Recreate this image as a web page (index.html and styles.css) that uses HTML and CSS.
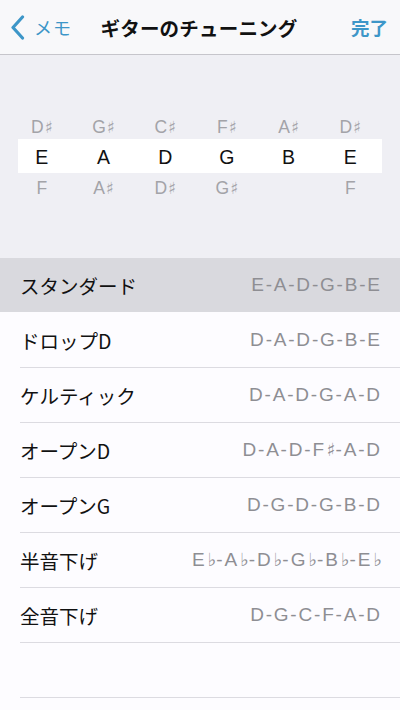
FILE: index.html
```html
<!DOCTYPE html>
<html lang="ja">
<head>
<meta charset="utf-8">
<title>ギターのチューニング</title>
<link rel="stylesheet" href="styles.css">
</head>
<body>
<header class="nav">
  <div class="nav-back">
    <svg class="chev" width="15" height="25" viewBox="0 0 15 25"><path d="M12.5 2 L3 12.5 L12.5 23" fill="none" stroke="#3d96c8" stroke-width="3.2" stroke-linecap="round" stroke-linejoin="round"/></svg>
    <span>メモ</span>
  </div>
  <div class="nav-title">ギターのチューニング</div>
  <div class="nav-done">完了</div>
</header>
<section class="picker">
  <div class="prow prow-top">
    <span>D<i class="acc">♯</i></span><span>G<i class="acc">♯</i></span><span>C<i class="acc">♯</i></span><span>F<i class="acc">♯</i></span><span>A<i class="acc">♯</i></span><span>D<i class="acc">♯</i></span>
  </div>
  <div class="prow prow-sel">
    <span>E</span><span>A</span><span>D</span><span>G</span><span>B</span><span>E</span>
  </div>
  <div class="prow prow-bot">
    <span>F</span><span>A<i class="acc">♯</i></span><span>D<i class="acc">♯</i></span><span>G<i class="acc">♯</i></span><span></span><span>F</span>
  </div>
</section>
<ul class="list">
  <li class="row selected"><span class="name">スタンダード</span><span class="val">E-A-D-G-B-E</span></li>
  <li class="row"><span class="name">ドロップD</span><span class="val">D-A-D-G-B-E</span></li>
  <li class="row"><span class="name">ケルティック</span><span class="val">D-A-D-G-A-D</span></li>
  <li class="row"><span class="name">オープンD</span><span class="val">D-A-D-F<i class="acc">♯</i>-A-D</span></li>
  <li class="row"><span class="name">オープンG</span><span class="val">D-G-D-G-B-D</span></li>
  <li class="row"><span class="name">半音下げ</span><span class="val flat">E<i class="acc">♭</i>-A<i class="acc">♭</i>-D<i class="acc">♭</i>-G<i class="acc">♭</i>-B<i class="acc">♭</i>-E<i class="acc">♭</i></span></li>
  <li class="row"><span class="name">全音下げ</span><span class="val">D-G-C-F-A-D</span></li>
  <li class="row empty"></li>
</ul>
</body>
</html>
```

FILE: styles.css
```css
html, body {
  margin: 0;
  padding: 0;
}
body {
  width: 400px;
  height: 710px;
  overflow: hidden;
  background: #fdfcff;
  font-family: "Liberation Sans", "Noto Sans CJK JP", sans-serif;
  color: #111;
}
.acc {
  font-style: normal;
  font-family: "DejaVu Sans", sans-serif;
  font-size: 0.95em;
  letter-spacing: 0;
  margin-left: 1px;
}
.nav {
  height: 54px;
  border-bottom: 1px solid #c6c5cb;
  background: #f8f8fa;
  display: flex;
  align-items: center;
  justify-content: space-between;
  padding: 0 12px 0 10px;
  box-sizing: content-box;
}
.nav-back {
  display: flex;
  align-items: center;
  gap: 9px;
  color: #3d96c8;
  font-size: 18px;
  width: 82px;
}
.nav-back span {
  font-family: "Noto Sans CJK JP", sans-serif;
  letter-spacing: 1px;
}
.nav-title {
  font-family: "Noto Sans CJK JP", sans-serif;
  font-weight: 700;
  font-size: 19.5px;
  letter-spacing: 0.2px;
  color: #111;
}
.nav-done {
  font-family: "Noto Sans CJK JP", sans-serif;
  font-weight: 700;
  font-size: 18.5px;
  color: #3d96c8;
  width: 82px;
  text-align: right;
}
.picker {
  height: 203px;
  background: #efeff4;
  padding-top: 60px;
  box-sizing: border-box;
}
.prow {
  display: grid;
  grid-template-columns: repeat(6, 61.7px);
  padding-left: 11px;
  align-items: center;
  justify-items: center;
}
.prow-top {
  height: 24px;
  font-size: 17.5px;
  color: #a3a3a8;
}
.prow-sel {
  height: 34px;
  font-size: 19.5px;
  color: #111;
  background: linear-gradient(to right, transparent 18px, #ffffff 18px, #ffffff 382px, transparent 382px);
  padding-top: 3px;
  box-sizing: border-box;
}
.prow-bot {
  height: 30px;
  font-size: 17.5px;
  color: #a3a3a8;
  padding-top: 1px;
  box-sizing: border-box;
}
.list {
  list-style: none;
  margin: 0;
  padding: 0;
}
.row {
  height: 54px;
  display: flex;
  align-items: center;
  justify-content: space-between;
  padding: 0 20px;
  background: #fdfcff;
  position: relative;
  margin-bottom: 1px;
}
.row::after {
  content: "";
  position: absolute;
  left: 20px;
  right: 0;
  bottom: -1px;
  height: 1px;
  background: #dcdbe1;
}
.row.selected {
  background: #d9d9de;
}
.row.selected::after {
  background: #fdfcff;
  left: 0;
}
.row .name {
  font-family: "Noto Sans CJK JP", sans-serif;
  font-size: 19.5px;
  color: #111;
}
.row .val {
  font-size: 19px;
  letter-spacing: 1.8px;
  margin-right: -1.8px;
  color: #8e8e93;
}
.row .val.flat {
  letter-spacing: 2px;
  margin-right: -2px;
}
```
